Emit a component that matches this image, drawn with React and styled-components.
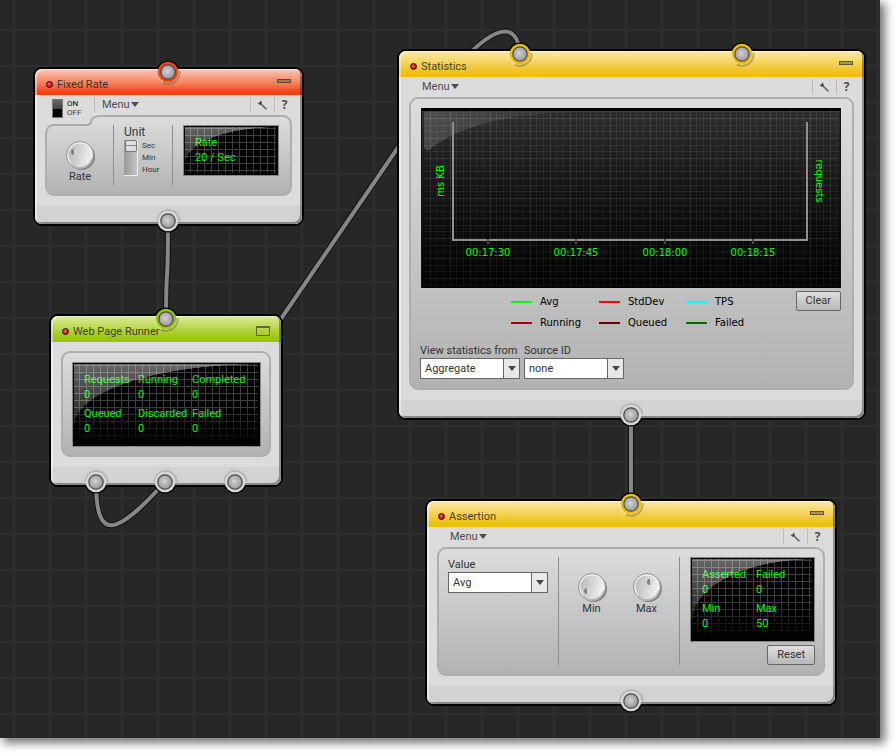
import React, { useState } from 'react';
import styled, { createGlobalStyle } from 'styled-components';

const HEADER_COLORS = {
  red: { from: '#fdc9b9', mid: '#f37850', to: '#ee4410', ring: '#f04812' },
  green: { from: '#dcec9c', mid: '#aed036', to: '#98c40a', ring: '#98c40a' },
  yellow: { from: '#fbe9ae', mid: '#f1cc40', to: '#ecbe12', ring: '#ecbe12' },
};

const WIRES = [
  'M168 222 C168 250 168 262 167 275 C166 290 166 300 166 318',
  'M272 332 L412 127',
  'M466 57 C492 30 517 18 520 54',
  'M96 482 C96 545 118 534 165 482',
  'M631 415 L631 503',
];

const LEGEND = [
  { label: 'Avg', color: '#00ff00' },
  { label: 'StdDev', color: '#ff0000' },
  { label: 'TPS', color: '#00ffff' },
  { label: 'Running', color: '#a00010' },
  { label: 'Queued', color: '#640000' },
  { label: 'Failed', color: '#0a6a0a' },
];

const TIME_TICKS = [
  { x: 66, label: '00:17:30' },
  { x: 154, label: '00:17:45' },
  { x: 243, label: '00:18:00' },
  { x: 331, label: '00:18:15' },
];

const Port = ({ x, side = 'bottom', color = '#d6d6d6' }) => (
  <PortSvg viewBox="0 0 28 28" $x={x} $side={side} aria-hidden="true">
    <defs>
      <radialGradient id="ball" cx="0.45" cy="0.45" r="0.6">
        <stop offset="0" stopColor="#d2d2d2" />
        <stop offset="1" stopColor="#929292" />
      </radialGradient>
    </defs>
    {side === 'top' ? (
      <path d="M2.5 11 A12 12 0 0 1 25.5 11 Z" fill="#000" />
    ) : (
      <path d="M2.5 17 A12 12 0 0 0 25.5 17 Z" fill="#000" />
    )}
    {side === 'top' ? (
      <g fill="none" strokeWidth="2">
        <path d="M3.5 14 A10.5 10.5 0 0 0 24.5 14" stroke="#fff" strokeOpacity="0.35" />
        <path d="M9 24.5 A11.5 11.5 0 0 0 25.5 13" stroke="#000" strokeOpacity="0.25" />
      </g>
    ) : (
      <path d="M3.5 14 A11 11 0 0 1 25.5 14" fill="none" stroke="#b6b6b6" strokeWidth="2" />
    )}
    <circle cx="14" cy="14" r="10.3" fill={color} />
    <circle cx="14" cy="14" r="7.2" fill="url(#ball)" stroke="#4a4a4a" strokeWidth="1.2" />
  </PortSvg>
);

const Knob = ({ label, dotX, dotY, min = 0, max = 100, defaultValue = 0 }) => (
  <KnobLabel>
    <KnobDial>
      <svg viewBox="0 0 32 32" width="32" height="32" aria-hidden="true">
        <defs>
          <linearGradient id="knobFace" x1="0" y1="0" x2="1" y2="0.2">
            <stop offset="0" stopColor="#b8b8b8" />
            <stop offset="1" stopColor="#ededed" />
          </linearGradient>
        </defs>
        <circle cx="17.5" cy="17.5" r="13.5" fill="#808080" />
        <circle cx="16" cy="16" r="13.5" fill="#f2f2f2" stroke="#8e8e8e" />
        <circle cx="16" cy="16" r="11.5" fill="url(#knobFace)" />
        <path d="M7 25 A12.5 12.5 0 0 0 28 20" fill="none" stroke="#b4b4b4" strokeWidth="2" />
        <circle cx={dotX} cy={dotY} r="3" fill="#d6d6d6" />
        <path d={`M${dotX} ${dotY - 3} a3 3 0 0 0 0 6 z`} fill="#808080" />
      </svg>
      <KnobInput type="range" min={min} max={max} defaultValue={defaultValue} />
    </KnobDial>
    {label}
  </KnobLabel>
);

const WrenchIcon = () => (
  <svg viewBox="0 0 10 10" width="10" height="10" aria-hidden="true">
    <path d="M4 4 L9 8.8" stroke="#666" strokeWidth="1.6" strokeLinecap="round" />
    <path d="M0.4 2.8 L2.4 4.7 L4.5 4.2 L4.8 2 L3 0.4 L3 2.2 L1.9 2.8 Z" fill="#444" />
  </svg>
);

const Toolbar = ({ children }) => (
  <ToolbarRow>
    {children}
    <MenuButton type="button">Menu<Caret /></MenuButton>
    <ToolButton type="button" aria-label="Settings"><WrenchIcon /></ToolButton>
    <HelpButton type="button" aria-label="Help">?</HelpButton>
  </ToolbarRow>
);

const Node = ({ title, theme, x, y, width, collapsed, ports, children }) => (
  <NodeFrame $x={x} $y={y} $width={width}>
    <NodeBody>
      <NodeHeader $colors={HEADER_COLORS[theme]}>
        <Led />
        <NodeTitle>{title}</NodeTitle>
        <SizeButton type="button" aria-label={collapsed ? 'Expand' : 'Minimize'}>
          <SizeGlyph $tall={collapsed} />
        </SizeButton>
      </NodeHeader>
      {children}
      <NodeFooter />
    </NodeBody>
    {ports.map((port) => (
      <Port
        key={`${port.side}-${port.x}`}
        x={port.x}
        side={port.side}
        color={port.side === 'top' ? HEADER_COLORS[theme].ring : undefined}
      />
    ))}
  </NodeFrame>
);

const Readout = ({ items, columns }) => (
  <Lcd>
    <LcdGrid $columns={columns}>
      {items.map(([name, value]) => (
        <div key={name}>
          <dt>{name}</dt>
          <dd>{value}</dd>
        </div>
      ))}
    </LcdGrid>
  </Lcd>
);

const Dropdown = ({ id, label, options }) => (
  <Field>
    <label htmlFor={id}>{label}</label>
    <SelectBox>
      <select id={id}>
        {options.map((option) => (
          <option key={option}>{option}</option>
        ))}
      </select>
    </SelectBox>
  </Field>
);

const StatisticsChart = () => (
  <Chart viewBox="0 0 420 180" role="img" aria-label="Statistics over time">
    <defs>
      <linearGradient id="chartBg" x1="0" y1="0" x2="0" y2="1">
        <stop offset="0" stopColor="#303030" />
        <stop offset="0.5" stopColor="#181818" />
        <stop offset="1" stopColor="#060606" />
      </linearGradient>
      <linearGradient id="chartFade" x1="0" y1="0" x2="0" y2="1">
        <stop offset="0" stopColor="#000" stopOpacity="0" />
        <stop offset="1" stopColor="#000" stopOpacity="0.4" />
      </linearGradient>
      <linearGradient id="chartGlare" x1="0" y1="0" x2="1" y2="0">
        <stop offset="0" stopColor="#fff" stopOpacity="0.16" />
        <stop offset="1" stopColor="#fff" stopOpacity="0.02" />
      </linearGradient>
      <pattern id="chartGrid" width="20" height="20" x="9" y="10" patternUnits="userSpaceOnUse">
        <path d="M6.5 0 V20 M13.5 0 V20 M0 7.5 H20 M0 13.5 H20" stroke="#fff" strokeOpacity="0.07" fill="none" />
        <path d="M0.5 0 V20 M0 0.5 H20" stroke="#fff" strokeOpacity="0.11" fill="none" />
      </pattern>
    </defs>
    <rect width="420" height="180" fill="url(#chartBg)" />
    <rect x="3" y="3" width="414" height="175" fill="url(#chartGrid)" />
    <rect width="420" height="180" fill="url(#chartFade)" />
    <path d="M3 4 H150 C90 6 35 18 7 43 L3 40 Z" fill="url(#chartGlare)" />
    <path d="M0 1.5 H420" stroke="#000" strokeWidth="3" />
    <path d="M0.5 0 V180 M419.5 0 V180" stroke="#111" />
    <path d="M32 14 V132 H386 V14" fill="none" stroke="#909090" strokeWidth="2" />
    {TIME_TICKS.map((tick) => (
      <g key={tick.label}>
        <path d={`M${tick.x + 1} 131 V136`} stroke="#444" strokeWidth="2" />
        <text x={tick.x + 1} y="148" textAnchor="middle">{tick.label}</text>
      </g>
    ))}
    <text transform="translate(23 73) rotate(-90)" textAnchor="middle">ms KB</text>
    <text transform="translate(395 73) rotate(90)" textAnchor="middle">requests</text>
  </Chart>
);

export default function App() {
  const [isOn, setIsOn] = useState(true);

  return (
    <>
      <GlobalStyle />
      <Canvas>
        <WireLayer aria-hidden="true">
          {WIRES.map((d) => (
            <g key={d} fill="none">
              <path d={d} stroke="#111" strokeWidth="6" />
              <path d={d} stroke="#868686" strokeWidth="4" />
            </g>
          ))}
        </WireLayer>

        <Node
          title="Fixed Rate"
          theme="red"
          x={33}
          y={67}
          width={271}
          ports={[{ x: 135, side: 'top' }, { x: 135, side: 'bottom' }]}
        >
          <Toolbar>
            <PowerSwitch>
              <PowerInput
                type="checkbox"
                role="switch"
                aria-label="Power"
                checked={isOn}
                onChange={(e) => setIsOn(e.target.checked)}
              />
              <PowerText><b>ON</b><span>OFF</span></PowerText>
            </PowerSwitch>
          </Toolbar>
          <RatePanel>
            <NotchCorner viewBox="0 0 56 20" aria-hidden="true">
              <path d="M0 20 V0 H56 V1 C49 1 46 4 46 7 C46 10 43 10 40 10 H9 C4 10 1 14 1 20 Z" fill="#dbdbdb" />
              <path d="M1 20 C1 14 4 10 9 10 H40 C43 10 46 10 46 7 C46 4 49 1 56 1" fill="none" stroke="#a9a9a9" strokeWidth="2" />
            </NotchCorner>
            <KnobColumn><Knob label="Rate" dotX={10} dotY={13} defaultValue={20} /></KnobColumn>
            <UnitColumn>
              <label htmlFor="unit">Unit</label>
              <UnitSlider>
                <input id="unit" type="range" min="0" max="2" defaultValue="0" />
                <ul><li>Sec</li><li>Min</li><li>Hour</li></ul>
              </UnitSlider>
            </UnitColumn>
            <RateScreen>
              <Lcd $short>
                <LcdGrid $columns={1}>
                  <div><dt>Rate</dt><dd>20 / Sec</dd></div>
                </LcdGrid>
              </Lcd>
            </RateScreen>
          </RatePanel>
        </Node>

        <Node
          title="Web Page Runner"
          theme="green"
          x={49}
          y={314}
          width={234}
          collapsed
          ports={[
            { x: 117, side: 'top' },
            { x: 47, side: 'bottom' },
            { x: 116, side: 'bottom' },
            { x: 186, side: 'bottom' },
          ]}
        >
          <RunnerPanel>
            <Readout
              columns={3}
              items={[
                ['Requests', 0],
                ['Running', 0],
                ['Completed', 0],
                ['Queued', 0],
                ['Discarded', 0],
                ['Failed', 0],
              ]}
            />
          </RunnerPanel>
        </Node>

        <Node
          title="Statistics"
          theme="yellow"
          x={397}
          y={49}
          width={469}
          ports={[
            { x: 123, side: 'top' },
            { x: 345, side: 'top' },
            { x: 234, side: 'bottom' },
          ]}
        >
          <Toolbar />
          <StatsPanel>
            <StatisticsChart />
            <LegendRow>
              <LegendList>
                {LEGEND.map(({ label, color }) => (
                  <LegendItem key={label} $color={color}>{label}</LegendItem>
                ))}
              </LegendList>
              <PushButton type="button">Clear</PushButton>
            </LegendRow>
            <FieldRow>
              <Dropdown id="view-from" label="View statistics from" options={['Aggregate']} />
              <Dropdown id="source-id" label="Source ID" options={['none']} />
            </FieldRow>
          </StatsPanel>
        </Node>

        <Node
          title="Assertion"
          theme="yellow"
          x={425}
          y={499}
          width={412}
          ports={[{ x: 206, side: 'top' }, { x: 206, side: 'bottom' }]}
        >
          <Toolbar />
          <AssertionPanel>
            <ValueColumn>
              <Dropdown id="value" label="Value" options={['Avg', 'StdDev', 'TPS']} />
            </ValueColumn>
            <LimitColumn>
              <Knob label="Min" dotX={11} dotY={20} />
              <Knob label="Max" dotX={19} dotY={11} defaultValue={50} />
            </LimitColumn>
            <ResultColumn>
              <Readout
                columns={2}
                items={[
                  ['Asserted', 0],
                  ['Failed', 0],
                  ['Min', 0],
                  ['Max', 50],
                ]}
              />
              <PushButton type="button">Reset</PushButton>
            </ResultColumn>
          </AssertionPanel>
        </Node>
      </Canvas>
    </>
  );
}

// ========== STYLED COMPONENTS ==========

const GlobalStyle = createGlobalStyle`
  *, *::before, *::after {
    box-sizing: border-box;
  }

  body {
    margin: 0;
    background: #fff;
    color: #333;
    font-family: Roboto, "Noto Sans", sans-serif;
    font-size: 11px;
    line-height: 15px;
  }

  button, select, input {
    margin: 0;
    font: inherit;
    color: inherit;
  }

  ul, dl, dd {
    margin: 0;
    padding: 0;
    list-style: none;
  }
`;

const Canvas = styled.main`
  position: relative;
  min-height: calc(100vh - 16px);
  margin: 0 16px 16px 0;
  background-color: #272727;
  background-image:
    linear-gradient(to right, #2e2e2e 2px, transparent 2px),
    linear-gradient(to bottom, #2e2e2e 2px, transparent 2px);
  background-size: 36px 36px;
  background-position: 13px 29px;
  box-shadow: 4px 4px 9px 1px rgba(0, 0, 0, 0.55);
`;

const WireLayer = styled.svg`
  position: absolute;
  inset: 0;
  width: 100%;
  height: 100%;
`;

const NodeFrame = styled.section`
  position: absolute;
  left: ${props => props.$x}px;
  top: ${props => props.$y}px;
  width: ${props => props.$width}px;
`;

const NodeBody = styled.div`
  position: relative;
  overflow: hidden;
  border: 2px solid #000;
  border-radius: 9px;
  background: #dbdbdb;

  &::after {
    content: '';
    position: absolute;
    inset: 0;
    border-radius: 7px;
    box-shadow:
      inset 2px 1px 0 rgba(255, 255, 255, 0.45),
      inset -2px -2px 0 rgba(0, 0, 0, 0.35);
    pointer-events: none;
  }
`;

const NodeHeader = styled.header`
  display: flex;
  align-items: center;
  height: 26px;
  padding: 4px 11px 0 11px;
  background: linear-gradient(
    to bottom,
    ${props => props.$colors.from} 0%,
    ${props => props.$colors.mid} 60%,
    ${props => props.$colors.to} 90%
  );
`;

const Led = styled.span`
  width: 7px;
  height: 7px;
  margin-right: 4px;
  border: 1px solid #300;
  border-radius: 50%;
  background: radial-gradient(circle at 40% 40%, #ff6060, #c80a18 70%);
`;

const NodeTitle = styled.h2`
  flex: 1;
  margin: 0;
  font-size: 11px;
  font-weight: 400;
  color: rgba(30, 30, 30, 0.85);
`;

const SizeButton = styled.button`
  align-self: flex-start;
  padding: 6px 0 0;
  border: 0;
  background: none;
  line-height: 0;
`;

const SizeGlyph = styled.span`
  display: block;
  width: 14px;
  height: ${props => props.$tall ? '10px' : '4px'};
  border: 1px solid rgba(60, 60, 40, 0.7);
  border-top-width: ${props => props.$tall ? '2px' : '1px'};
  background: ${props => props.$tall ? 'none' : 'rgba(80, 80, 60, 0.45)'};
`;

const NodeFooter = styled.footer`
  height: 18px;
  background: #d2d2d2;
`;

const PortSvg = styled.svg`
  position: absolute;
  left: ${props => props.$x - 14}px;
  ${props => props.$side === 'top' ? 'top: -9px;' : 'bottom: -9px;'}
  width: 28px;
  height: 28px;
`;

const ToolbarRow = styled.div`
  position: relative;
  z-index: 1;
  display: flex;
  height: 20px;
  padding: 2px 8px 3px 0;
`;

const MenuButton = styled.button`
  display: flex;
  align-items: center;
  margin-right: auto;
  padding: 0 0 0 23px;
  border: 0;
  background: none;
  color: #4d4d4d;

  label + & {
    padding-left: 7px;
    border-left: 1px solid #bdbdbd;
  }
`;

const Caret = styled.span`
  margin-left: 1px;
  border: 4px solid transparent;
  border-top: 5px solid #4d4d4d;
  border-bottom: 0;
`;

const ToolButton = styled.button`
  display: flex;
  align-items: center;
  justify-content: center;
  width: 24px;
  padding: 0 2px 0 0;
  border: 0;
  border-left: 1px solid #bdbdbd;
  background: none;
`;

const HelpButton = styled(ToolButton)`
  width: 20px;
  padding: 0;
  font-family: "Open Sans", sans-serif;
  font-size: 12px;
  font-weight: 700;
  color: #4d4d4d;
`;

const PowerSwitch = styled.label`
  display: flex;
  align-items: flex-start;
  gap: 4px;
  width: 59px;
  height: 20px;
  padding: 2px 0 0 17px;
`;

const PowerInput = styled.input`
  appearance: none;
  width: 11px;
  height: 19px;
  flex: none;
  border: 1px solid #777;
  background: linear-gradient(#666, #444) no-repeat 0 100% / 100% 9px #000;

  &:checked {
    background-position: 0 0;
  }
`;

const PowerText = styled.span`
  display: flex;
  flex-direction: column;
  font-size: 8px;
  line-height: 9px;
  color: #444;

  b {
    font-weight: 400;
    color: #000;
  }
`;

const Panel = styled.div`
  position: relative;
  display: flex;
  margin: 0 10px 10px;
  border: 2px solid #aeaeae;
  border-radius: 9px;
  background: linear-gradient(to bottom, #dcdcdc, #b2b2b2);
`;

const RatePanel = styled(Panel)`
  padding: 8px 11px 9px 0;
`;

const RunnerPanel = styled(Panel)`
  margin-top: 9px;
  padding: 9px 8px 8px 9px;
`;

const StatsPanel = styled(Panel)`
  flex-direction: column;
  padding: 9px 11px 9px 10px;
`;

const AssertionPanel = styled(Panel)`
  padding: 8px 8px 9px 9px;
`;

const NotchCorner = styled.svg`
  position: absolute;
  left: -2px;
  top: -2px;
  width: 56px;
  height: 20px;
`;

const KnobColumn = styled.div`
  width: 67px;
  height: 60px;
  padding-top: 14px;
  display: flex;
  justify-content: center;
  border-right: 1px solid #8e8e8e;
`;

const KnobLabel = styled.label`
  display: flex;
  flex-direction: column;
  align-items: center;
  line-height: 12px;
`;

const KnobDial = styled.span`
  position: relative;
  display: block;
  width: 32px;
  height: 32px;
`;

const KnobInput = styled.input`
  position: absolute;
  inset: 0;
  width: 100%;
  height: 100%;
  opacity: 0;
  cursor: pointer;
`;

const UnitColumn = styled.div`
  width: 59px;
  height: 60px;
  padding-left: 10px;
  border-right: 1px solid #8e8e8e;

  label {
    display: block;
    font-size: 12px;
  }
`;

const UnitSlider = styled.div`
  display: flex;
  gap: 4px;
  font-size: 8px;
  line-height: 12px;

  input {
    appearance: none;
    writing-mode: vertical-lr;
    width: 14px;
    height: 36px;
    border-right: 1px solid #eee;
    border-bottom: 1px solid #eee;
    background: linear-gradient(to right, #999, #c4c4c4);
  }

  input::-webkit-slider-thumb {
    appearance: none;
    width: 12px;
    height: 12px;
    border: 1px solid #777;
    border-radius: 2px;
    background: linear-gradient(#ddd 4px, #888 4px, #888 5px, #ddd 5px);
  }
`;

const RateScreen = styled.div`
  flex: 1;
  padding-left: 10px;
`;

const Lcd = styled.div`
  position: relative;
  flex: 1;
  height: ${props => props.$short ? '51px' : '85px'};
  padding: 9px 0 0 11px;
  border: 1px solid #868686;
  background: #000;
  color: #14ee14;

  &::before {
    content: '';
    position: absolute;
    inset: 1px 2px 2px 1px;
    background-image:
      linear-gradient(to right, #404040 1px, transparent 1px),
      linear-gradient(to bottom, #404040 1px, transparent 1px);
    background-size: 7px 7px;
    background-position: 5px 1px;
    mask-image: linear-gradient(#000 50%, ${props => props.$short ? '#000' : 'transparent'});
  }

  &::after {
    content: '';
    position: absolute;
    inset: 1px 1px 25% 1px;
    background: linear-gradient(to bottom, rgba(255, 255, 255, 0.4), rgba(255, 255, 255, 0.12));
    mask-image: radial-gradient(ellipse 100% 100% at 100% 100%, transparent 99%, #000 100%);
    pointer-events: none;
  }
`;

const LcdGrid = styled.dl`
  position: relative;
  display: grid;
  grid-template-columns: repeat(${props => props.$columns}, 54px);
  row-gap: 4px;
  white-space: nowrap;
`;

const Chart = styled.svg`
  display: block;
  width: 100%;

  text {
    fill: #00ff00;
    font-family: "DejaVu Sans", sans-serif;
    font-size: 10px;
  }
`;

const LegendRow = styled.div`
  display: flex;
  justify-content: space-between;
  align-items: flex-start;
  margin-top: 3px;
`;

const LegendList = styled.ul`
  display: grid;
  grid-template-columns: 88px 87px auto;
  margin-left: 90px;
`;

const LegendItem = styled.li`
  display: flex;
  align-items: center;
  gap: 8px;
  height: 21px;
  font-family: "DejaVu Sans", sans-serif;
  font-size: 10px;
  color: #000;

  &::before {
    content: '';
    width: 21px;
    height: 2px;
    background: ${props => props.$color};
  }
`;

const PushButton = styled.button`
  height: 20px;
  padding: 0 9px;
  border: 1px solid #666;
  border-radius: 2px;
  background: linear-gradient(to bottom, #dedede, #b8b8b8);
  line-height: 18px;
`;

const FieldRow = styled.div`
  display: flex;
  gap: 4px;
  margin: 10px 0 0 -1px;
`;

const Field = styled.div`
  width: 100px;

  label {
    display: block;
    white-space: nowrap;
  }
`;

const SelectBox = styled.div`
  position: relative;

  select {
    appearance: none;
    display: block;
    width: 100%;
    height: 21px;
    padding: 0 20px 0 4px;
    border: 1px solid #666;
    border-radius: 0;
    background: linear-gradient(to left, #e8e8e8 15px, #666 15px, #666 16px, #fff 16px);
  }

  &::after {
    content: '';
    position: absolute;
    right: 4px;
    top: 8px;
    border: 4px solid transparent;
    border-top: 5px solid #444;
    border-bottom: 0;
    pointer-events: none;
  }
`;

const ValueColumn = styled.div`
  width: 111px;
  height: 108px;
  border-right: 1px solid #8e8e8e;
`;

const LimitColumn = styled.div`
  display: flex;
  justify-content: center;
  gap: 23px;
  width: 121px;
  padding-top: 14px;
  border-right: 1px solid #8e8e8e;
`;

const ResultColumn = styled.div`
  display: flex;
  flex: 1;
  flex-direction: column;
  align-items: flex-end;
  gap: 3px;
  padding-left: 10px;

  ${Lcd} {
    flex: none;
    width: 100%;
  }
`;
